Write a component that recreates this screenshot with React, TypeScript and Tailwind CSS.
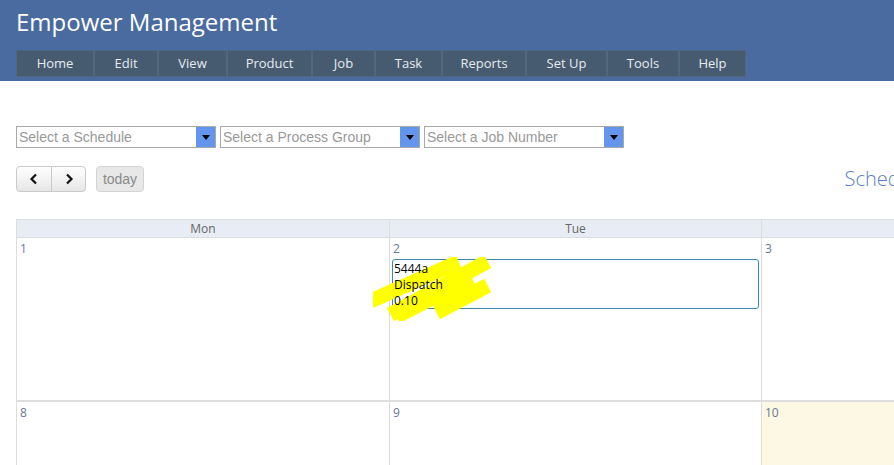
import React from 'react';

const navItems = [
  { label: 'Home', w: 76 },
  { label: 'Edit', w: 64 },
  { label: 'View', w: 69 },
  { label: 'Product', w: 85 },
  { label: 'Job', w: 63 },
  { label: 'Task', w: 67 },
  { label: 'Reports', w: 84 },
  { label: 'Set Up', w: 81 },
  { label: 'Tools', w: 72 },
  { label: 'Help', w: 67 },
];

const selects = ['Select a Schedule', 'Select a Process Group', 'Select a Job Number'];

function SelectBox({ placeholder }: { placeholder: string }) {
  return (
    <div className="flex h-[22px] w-[200px] border border-[#a9a9a9] bg-white">
      <span className="flex-1 truncate pl-[2px] text-[14px] leading-[20px] text-[#999]" style={{ fontFamily: '"Liberation Sans", Arial, sans-serif' }}>
        {placeholder}
      </span>
      <span className="flex w-[19px] items-center justify-center bg-[#6495ed]">
        <svg width="8" height="5" viewBox="0 0 8 5">
          <path d="M0 0h8L4 5z" fill="#000" />
        </svg>
      </span>
    </div>
  );
}

function DayCell({ n, today, children }: { n: number; today?: boolean; children?: React.ReactNode }) {
  return (
    <div className={`relative border-r border-[#ddd] ${today ? 'bg-[#fcf8e3]' : 'bg-white'}`}>
      <div className="pl-[3px] pt-[3px] text-[12px] leading-[16px] text-[#6a7796]">{n}</div>
      {children}
    </div>
  );
}

export default function App() {
  return (
    <div className="h-[465px] w-[894px] overflow-hidden bg-white" style={{ fontFamily: '"Open Sans", "Noto Sans", sans-serif' }}>
      {/* Header */}
      <header className="h-[81px] bg-[#4a6ba0] pl-4">
        <h1 className="pt-[5px] text-[24px] leading-[34px] text-white">Empower Management</h1>
        <nav className="mt-[11px] flex h-[27px] w-fit bg-[#465b6f] border border-[#506780]">
          {navItems.map((item, i) => (
            <a
              key={item.label}
              className={`flex items-center justify-center text-[13px] text-[#e6ebf1] ${i > 0 ? 'border-l-2 border-[#506780]' : ''}`}
              style={{ width: item.w }}
            >
              {item.label}
            </a>
          ))}
        </nav>
      </header>

      {/* Filters */}
      <div className="mt-[45px] flex gap-[4px] pl-4">
        {selects.map((s) => (
          <SelectBox key={s} placeholder={s} />
        ))}
      </div>

      {/* Toolbar */}
      <div className="mt-[16px] flex items-center pl-4">
        <div className="flex h-[26px] overflow-hidden rounded-[4px] border border-[#c9c9c9] bg-gradient-to-b from-white to-[#e6e6e6]">
          <button className="flex w-[34px] items-center justify-center">
            <svg width="10" height="12" viewBox="0 0 10 12">
              <path d="M7 1.5L2.5 6 7 10.5" fill="none" stroke="#111" strokeWidth="2.2" />
            </svg>
          </button>
          <button className="flex w-[34px] items-center justify-center border-l border-[#c9c9c9]">
            <svg width="10" height="12" viewBox="0 0 10 12">
              <path d="M3 1.5L7.5 6 3 10.5" fill="none" stroke="#111" strokeWidth="2.2" />
            </svg>
          </button>
        </div>
        <button className="ml-[10px] h-[26px] w-[48px] rounded-[4px] border border-[#d3d3d3] bg-[#e8e8e8] text-[14px] text-[#8a8a8a]" style={{ fontFamily: '"Liberation Sans", Arial, sans-serif' }}>
          today
        </button>
        <div className="ml-auto mr-[-33px] text-[20px] font-light text-[#5a7fbf]">Schedule</div>
      </div>

      {/* Calendar */}
      <div className="ml-4 mt-[25px] w-[1200px]">
        <div className="grid h-[19px] grid-cols-[373px_372px_373px] border-t border-b border-l border-[#ddd] bg-[#e8edf5]">
          {['Mon', 'Tue', 'Wed'].map((d) => (
            <div key={d} className="border-r border-[#ddd] text-center text-[12px] leading-[17px] text-[#666]">
              {d}
            </div>
          ))}
        </div>
        <div className="grid h-[164px] grid-cols-[373px_372px_373px] border-b-2 border-l border-[#ddd]">
          <DayCell n={1} />
          <DayCell n={2}>
            <div className="relative mx-[2px] mt-[2px] h-[50px] rounded-[3px] border border-[#3a87ad] bg-white pl-[1px] pt-[1px] text-[12px] leading-[16px] text-black">
              <svg className="absolute left-[-20px] top-[-3px]" width="120" height="64" viewBox="0 0 120 64">
                <g stroke="#ffff00" strokeWidth="15" strokeLinecap="square" fill="none">
                  <path d="M2 42L79 8" />
                  <path d="M24 54L108 8" />
                  <path d="M30 56L92 24" />
                  <path d="M70 52L108 32" />
                </g>
              </svg>
              <div className="relative">5444a</div>
              <div className="relative">Dispatch</div>
              <div className="relative">0.10</div>
            </div>
          </DayCell>
          <DayCell n={3} />
        </div>
        <div className="grid h-[80px] grid-cols-[373px_372px_373px] border-l border-[#ddd]">
          <DayCell n={8} />
          <DayCell n={9} />
          <DayCell n={10} today />
        </div>
      </div>
    </div>
  );
}
